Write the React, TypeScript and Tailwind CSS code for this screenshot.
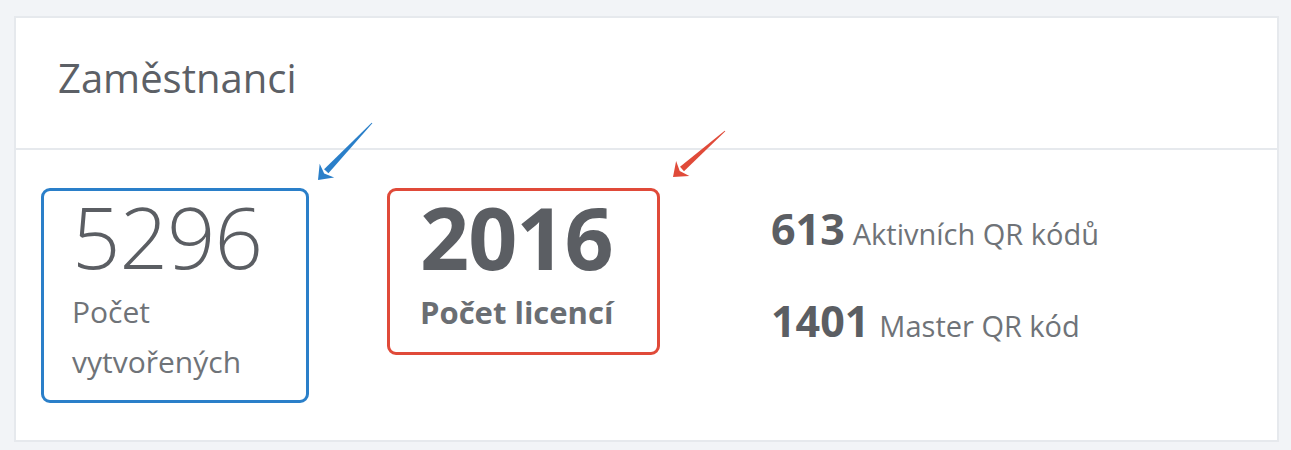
import React from "react";

const font = { fontFamily: '"Open Sans", "Liberation Sans", sans-serif' };

function Arrow({ x1, y1, x2, y2, color }: { x1: number; y1: number; x2: number; y2: number; color: string }) {
  // annotation arrow: tapering shaft + wide filled head at (x2, y2)
  const dx = x2 - x1;
  const dy = y2 - y1;
  const len = Math.hypot(dx, dy);
  const ux = dx / len;
  const uy = dy / len;
  const hl = 12;
  const hw = 10;
  const bx = x2 - ux * hl;
  const by = y2 - uy * hl;
  const px = -uy;
  const py = ux;
  return (
    <g>
      <polygon
        points={`${x1 - px * 0.5},${y1 - py * 0.5} ${x1 + px * 0.5},${y1 + py * 0.5} ${bx + px * 3},${by + py * 3} ${bx - px * 3},${by - py * 3}`}
        fill={color}
      />
      <polygon
        points={`${x2},${y2} ${bx + px * hw - ux * 1},${by + py * hw - uy * 1} ${bx + ux * 3},${by + uy * 3} ${bx - px * hw - ux * 1},${by - py * hw - uy * 1}`}
        fill={color}
      />
    </g>
  );
}

export default function App() {
  return (
    <div className="relative w-[1291px] h-[450px] bg-[#f2f4f7] pt-[16px] pl-[14px]" style={font}>
      <div className="w-[1265px] h-[426px] bg-white border-2 border-[#e6e9ed]">
        {/* header */}
        <div className="h-[132px] pl-[42px] pt-[40px] border-b-2 border-[#e6e9ed]">
          <h2 className="text-[40px] leading-none text-[#5c6066]">Zaměstnanci</h2>
        </div>

        {/* stats */}
        <div className="flex items-start pl-[25px] pt-[38px]">
          <div className="w-[268px] h-[215px] border-[3px] border-[#2a7fc9] rounded-[9px] pl-[28px] pt-[3px]">
            <div className="text-[85px] leading-none font-light text-[#5b5e63] tracking-[-1px]">5296</div>
            <div className="mt-[8px] text-[30px] leading-[50px] text-[#6f7378]">
              <div>Počet</div>
              <div>vytvořených</div>
            </div>
          </div>

          <div className="ml-[78px] w-[273px] h-[167px] border-[3px] border-[#e04a39] rounded-[9px] pl-[30px] pt-[3px]">
            <div className="text-[86px] leading-none font-bold text-[#5b5e63] tracking-[-1px]">2016</div>
            <div className="mt-[8px] text-[31px] leading-[49px] font-bold text-[#6a6e73]">Počet licencí</div>
          </div>

          <div className="ml-[111px] pt-[19px] text-[#6f7378]">
            <div className="flex items-baseline gap-[8px] leading-none whitespace-nowrap">
              <span className="text-[43px] font-bold text-[#5b5e63]">613</span>
              <span className="text-[29px]">Aktivních QR kódů</span>
            </div>
            <div className="mt-[49px] flex items-baseline gap-[10px] leading-none whitespace-nowrap">
              <span className="text-[43px] font-bold text-[#5b5e63]">1401</span>
              <span className="text-[29px]">Master QR kód</span>
            </div>
          </div>
        </div>
      </div>

      {/* annotation arrows */}
      <svg className="absolute inset-0 pointer-events-none" width="1291" height="450">
        <Arrow x1={372} y1={123} x2={318} y2={180} color="#2a7fc9" />
        <Arrow x1={725} y1={131} x2={673} y2={177} color="#e04a39" />
      </svg>
    </div>
  );
}
